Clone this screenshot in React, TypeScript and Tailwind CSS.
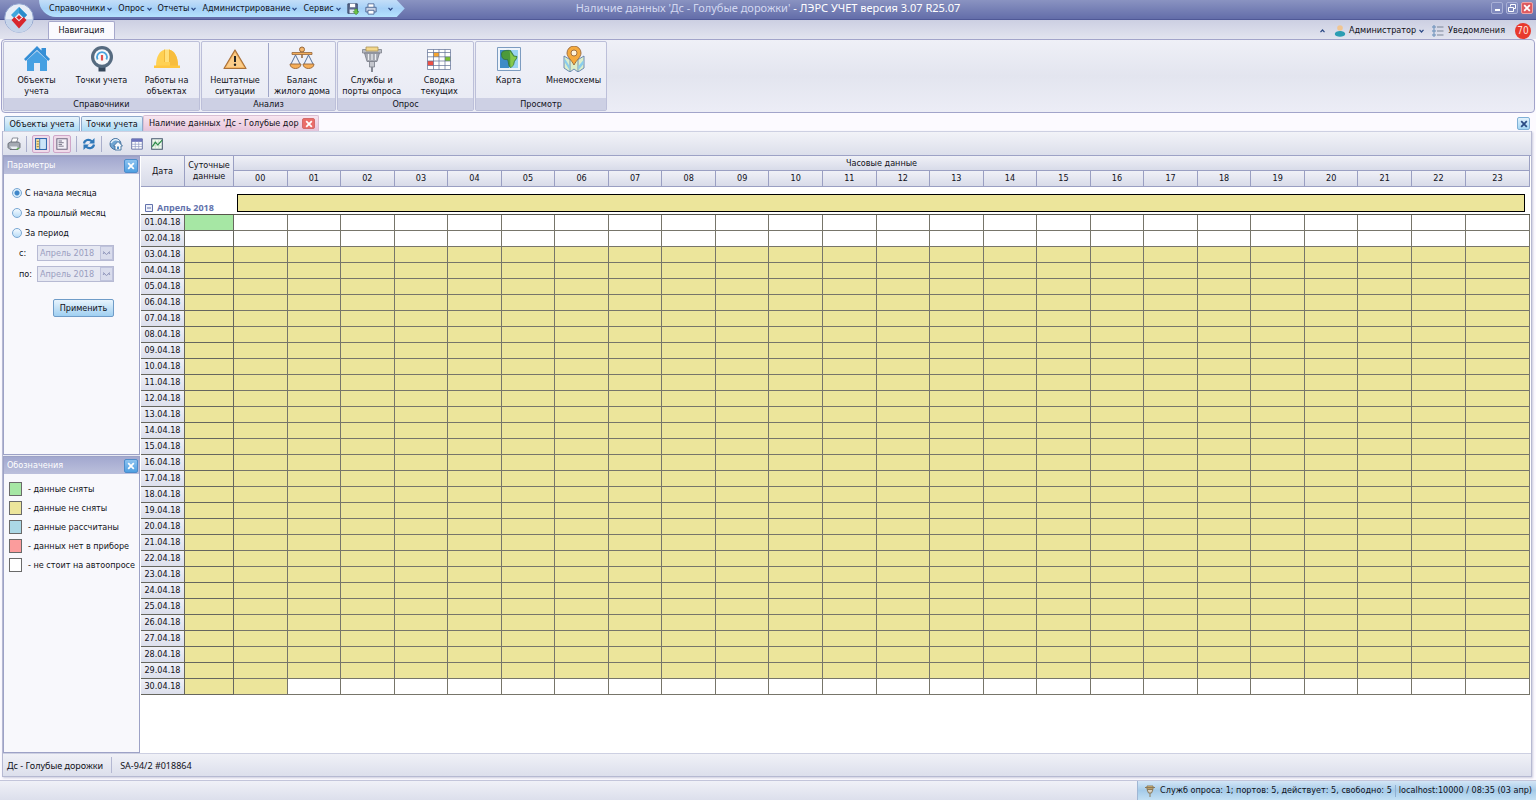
import { useState } from "react";
import type { ReactNode } from "react";

const YELLOW = "bg-[#ece59b]";
const GREEN = "bg-[#a6e7a4]";

function Chevron({ up = false }: { up?: boolean }) {
  return (
    <svg viewBox="0 0 5 4" className="h-1 w-[5px] shrink-0" fill="none" stroke="#2c4a86" strokeWidth="1.2">
      <path d={up ? "M.5 3.200 2.500 1l2 2.200" : "M.5.8l2 2.200 2-2.200"} />
    </svg>
  );
}

function Cross({ color }: { color: string }) {
  return (
    <svg viewBox="0 0 10 10" className="h-2 w-2" stroke={color} strokeWidth="2.2" fill="none">
      <path d="M1.5 1.5l7 7M8.5 1.5l-7 7" />
    </svg>
  );
}

/* ---------- ribbon icons ---------- */
const HouseIcon = () => (
  <svg viewBox="0 0 26 26" className="h-full w-full">
    <path d="M3 14v11h7v-8h6v8h7V14L13 5z" fill="#46a0e2" />
    <path d="M0 13 13 0l4.500 4.500V2H22v7l4 4-1.800 2L13 4 1.800 15z" fill="#358fd6" />
    <path d="M10 25v-8h6v8" fill="#e8ebf4" />
  </svg>
);
const GaugeIcon = () => (
  <svg viewBox="0 0 26 26" className="h-full w-full">
    <path d="M9.500 19h7v6.500h-7z" fill="#34465a" />
    <circle cx="13" cy="11" r="11" fill="#566b80" />
    <circle cx="13" cy="11" r="7.800" fill="#f6f8fb" />
    <path d="M8.600 13.500a5 5 0 1 1 8.800 0" fill="none" stroke="#4aa3dd" strokeWidth="1.800" />
    <path d="M13 9v5.500" stroke="#e2504d" strokeWidth="2.200" />
  </svg>
);
const HelmetIcon = () => (
  <svg viewBox="0 0 26 26" className="h-full w-full">
    <path d="M2 20C2 10 6 5 10 4h6c4 1 8 6 8 16z" fill="#ffd152" />
    <path d="M16 4c4 1 8 6 8 16h-8z" fill="#f7bd3e" />
    <path d="M10.500 3.500h5V16h-5z" fill="#ffe07a" />
    <path d="M10.500 3.500V16M15.500 3.500V16" stroke="#eeb02e" strokeWidth=".8" />
    <path d="M0 19.500h26V22H0z" fill="#ffc640" />
  </svg>
);
const WarnIcon = () => (
  <svg viewBox="0 0 26 26" className="h-full w-full">
    <path d="M13 4 24 22.500H2z" fill="#f5b562" stroke="#a9713a" strokeWidth="1.200" strokeLinejoin="round" />
    <path d="M13 6.500 21.800 21H4.200z" fill="#fbcd8a" />
    <path d="M13 10v6" stroke="#222" strokeWidth="2" />
    <circle cx="13" cy="18.800" r="1.200" fill="#222" />
  </svg>
);
const ScalesIcon = () => (
  <svg viewBox="0 0 26 26" className="h-full w-full" fill="none">
    <circle cx="13" cy="3.500" r="2.500" fill="#f4b76d" stroke="#96663a" />
    <path d="M3 6.500h20v2H3z" fill="#f3ae5c" stroke="#96663a" strokeWidth=".8" />
    <path d="M13 8.500V12" stroke="#96663a" strokeWidth="1.500" />
    <path d="M6.500 9 2 18M6.500 9 11 18M19.500 9 15 18M19.500 9 24 18" stroke="#54709a" strokeWidth="1" />
    <path d="M1 18h11c0 6-11 6-11 0zM14 18h11c0 6-11 6-11 0z" fill="#f6ae58" stroke="#96663a" strokeWidth=".9" />
  </svg>
);
const PlugIcon = () => (
  <svg viewBox="0 0 26 26" className="h-full w-full">
    <path d="M3.500 3.500h19V7h-19z" fill="#b9bcc4" stroke="#7e828c" strokeWidth=".8" />
    <path d="M7 1h12v4H7z" fill="#f3d78b" stroke="#a99256" strokeWidth=".8" />
    <path d="M5.500 7h15L18 15.500H8z" fill="#a6a9b2" stroke="#777b86" strokeWidth=".8" />
    <path d="M10.500 15.500h5V21h-5z" fill="#c4c6cd" stroke="#777b86" strokeWidth=".8" />
    <path d="M9.500 8v6M13 8v6M16.500 8v6" stroke="#eceef2" strokeWidth="1.200" />
    <path d="M13 21v5" stroke="#858994" strokeWidth="2" />
  </svg>
);
const GridIcon = () => (
  <svg viewBox="0 0 26 26" className="h-full w-full">
    <path d="M1.500 3.500h23v20h-23z" fill="#fff" />
    <path d="M7.500 6.500h5.500v4.300H7.500z" fill="#f7a52e" />
    <path d="M19 10.800h5.500V15H19z" fill="#7fc132" />
    <path d="M1.500 15h6v4.500h-6z" fill="#ee4f43" />
    <path d="M1.500 3.500h23v20h-23zM7.500 3.500v20M13 3.500v20M19 3.500v20M1.500 6.500h23M1.500 10.800h23M1.500 15h23M1.500 19.500h23" fill="none" stroke="#5f6f93" strokeWidth=".7" />
  </svg>
);
const MapIcon = () => (
  <svg viewBox="0 0 26 26" className="h-full w-full">
    <path d="M1.500 1.500h23v23h-23z" fill="#eef4fb" stroke="#7d9cc0" />
    <path d="M4 4h18v18H4z" fill="#3f8cc6" />
    <path d="M13 4h9v18h-9z" fill="#9ad3f2" />
    <path d="M5.500 8c0-3 3.500-4 9-3.500l3.500 5.500 3 .5c0 3-3 4-3 6.500 0 2-2 4-3.500 4.500-2.500-1-1.500-5-3-8-4 .5-6-1-6-5.500z" fill="#4c9a3a" stroke="#2f6b31" strokeWidth=".7" />
    <path d="M13.500 5l4 5.500 3 .5c-.5 2.500-3 3.500-3 6 0 2-1 3.500-2.800 4.200-1-4 .3-10-1.200-16.200z" fill="#86c94c" />
  </svg>
);
const PinIcon = () => (
  <svg viewBox="0 0 26 26" className="h-full w-full">
    <path d="M3 10l5 3 5-1 5 1 5-3v12l-6 4-4-3-4 3-6-4z" fill="#dceecb" stroke="#5d7fae" strokeWidth=".9" />
    <path d="M9 13v13M17 13v13" stroke="#5d7fae" strokeWidth=".8" />
    <path d="M3.500 16l5 8v-4l-5-8zM17.500 20l5-6v4l-5 6z" fill="#89cdee" />
    <path d="M13 0a7 7 0 0 1 7 7c0 4-4.500 7-7 12-2.500-5-7-8-7-12a7 7 0 0 1 7-7z" fill="#f5aa3e" stroke="#96683a" strokeWidth=".9" />
    <circle cx="13" cy="7" r="3" fill="#fff3dc" stroke="#96683a" strokeWidth=".9" />
  </svg>
);

/* ---------- small icons ---------- */
const PrinterIcon = () => (
  <svg viewBox="0 0 14 14" className="h-[14px] w-[14px]">
    <path d="M4 5.500 5.500 1H11L9.500 5.500z" fill="#fff" stroke="#6f7480" strokeWidth=".8" />
    <path d="M1 6.500 3.500 5h8L13 6.500v4L11 12.500H3L1 10.500z" fill="#a5aab3" stroke="#555b66" strokeWidth=".8" />
    <path d="M3 9.500h7l1 2.500H5z" fill="#e9edf2" />
    <path d="M9.500 12.500l2.500-1.500" stroke="#5fb548" strokeWidth="1.200" />
  </svg>
);
const PrinterBlueIcon = () => (
  <svg viewBox="0 0 14 14" className="h-3 w-3">
    <path d="M3.500 5V1h7v4" fill="#fff" stroke="#44608f" />
    <path d="M1 5h12v5.500H1z" fill="#c9d3e6" stroke="#44608f" />
    <path d="M3.500 8.500h7V13h-7z" fill="#fff" stroke="#44608f" />
  </svg>
);
const SaveIcon = () => (
  <svg viewBox="0 0 14 14" className="h-3 w-3">
    <path d="M1 1h11v11H1z" fill="#5d6a8d" stroke="#31405f" />
    <path d="M3.500 1h6v4h-6z" fill="#fff" />
    <path d="M3 7.500h7V12H3z" fill="#dfe6f3" />
    <path d="M9 7v3H7.200l3.400 3.800L14 10h-2V7z" fill="#6fc443" stroke="#33842c" strokeWidth=".6" />
  </svg>
);
const PanelLeftIcon = () => (
  <svg viewBox="0 0 14 14" className="h-3 w-3">
    <path d="M.8.8h12.400v12.400H.8z" fill="#fff" stroke="#2f69ad" strokeWidth="1.500" />
    <path d="M1.500 1.500h4v11h-4z" fill="#f9dc92" />
    <path d="M6 1.500h6.500v11H6z" fill="#cbe5f9" />
    <path d="M5.500 1v12" stroke="#2f69ad" />
    <path d="M2 4h2.500M2 7h2.500M2 10h2.500" stroke="#9a7b33" />
  </svg>
);
const PanelDocIcon = () => (
  <svg viewBox="0 0 14 14" className="h-3 w-3">
    <path d="M1 .8h12v12.400H1z" fill="#f4f1f8" stroke="#6d6a80" strokeWidth="1.200" />
    <path d="M3 3.500h4M3 5.500h6M3 7.500h4M3 9.500h6" stroke="#57546b" strokeWidth=".9" />
  </svg>
);
const RefreshIcon = () => (
  <svg viewBox="0 0 14 14" className="h-[14px] w-[14px]" fill="none" stroke="#2f78b9" strokeWidth="2.200">
    <path d="M2 6.500C2.500 3 7 1.500 10 4.500M12 7.500c-.5 3.500-5 5-8 2" />
    <path d="M12.500 1v5.500H7zM1.500 13V7.500H7z" fill="#2f78b9" stroke="none" />
  </svg>
);
const GlobeHomeIcon = () => (
  <svg viewBox="0 0 14 14" className="h-[14px] w-[14px]">
    <circle cx="6.500" cy="7" r="5.500" fill="#6fa5d2" stroke="#48739f" />
    <path d="M2 6c2-4 6-4 8-2" stroke="#e3f0fa" strokeWidth="1.400" fill="none" />
    <path d="M4.500 9 9 4.500 13.500 9H12v4H6V9z" fill="#f5f8fb" stroke="#3f6f9d" strokeWidth=".9" />
    <path d="M8 9.500h2V12H8z" fill="#4a8ac2" />
  </svg>
);
const TableIcon = () => (
  <svg viewBox="0 0 14 14" className="h-3 w-3">
    <path d="M.8 1h12.400v12H.8z" fill="#fff" stroke="#56649b" />
    <path d="M.8 1h12.400v3.500H.8z" fill="#6c73bd" />
    <path d="M1 7.300h12M1 10h12M5 4v9M9 4v9" stroke="#8f9ac5" strokeWidth=".8" />
  </svg>
);
const ChartIcon = () => (
  <svg viewBox="0 0 14 14" className="h-3 w-3" fill="none">
    <path d="M.8 1h12.400v12H.8z" fill="#f2fbf1" stroke="#44566b" strokeWidth="1.200" />
    <path d="M1 5h12M1 9h12M5 2v11M9 2v11" stroke="#b9d3bd" strokeWidth=".7" />
    <path d="M1.500 10 5 5l3 3 5-5.500" stroke="#2d8b49" strokeWidth="1.400" />
  </svg>
);

const menus = ["Справочники", "Опрос", "Отчеты", "Администрирование", "Сервис"];

type Item = { icon: ReactNode; lines: string[] };
const groups: { title: string; width: string; divided?: boolean; items: Item[] }[] = [
  {
    title: "Справочники",
    width: "w-[197px]",
    items: [
      { icon: <HouseIcon />, lines: ["Объекты", "учета"] },
      { icon: <GaugeIcon />, lines: ["Точки учета"] },
      { icon: <HelmetIcon />, lines: ["Работы на", "объектах"] },
    ],
  },
  {
    title: "Анализ",
    width: "w-[135px]",
    divided: true,
    items: [
      { icon: <WarnIcon />, lines: ["Нештатные", "ситуации"] },
      { icon: <ScalesIcon />, lines: ["Баланс", "жилого дома"] },
    ],
  },
  {
    title: "Опрос",
    width: "w-[137px]",
    items: [
      { icon: <PlugIcon />, lines: ["Службы и", "порты опроса"] },
      { icon: <GridIcon />, lines: ["Сводка", "текущих"] },
    ],
  },
  {
    title: "Просмотр",
    width: "w-[132px]",
    items: [
      { icon: <MapIcon />, lines: ["Карта"] },
      { icon: <PinIcon />, lines: ["Мнемосхемы"] },
    ],
  },
];

const legend = [
  { color: GREEN, text: "- данные сняты" },
  { color: YELLOW, text: "- данные не сняты" },
  { color: "bg-[#abd8e6]", text: "- данные рассчитаны" },
  { color: "bg-[#fb9c9c]", text: "- данных нет в приборе" },
  { color: "bg-white", text: "- не стоит на автоопросе" },
];

const hours = Array.from({ length: 24 }, (_, i) => String(i).padStart(2, "0"));
const days = Array.from({ length: 30 }, (_, i) => i + 1);

function cellColor(day: number, hour: number) {
  if (day < 3) return "bg-white";
  if (day === 30 && hour > 0) return "bg-white";
  return YELLOW;
}
function dayColor(day: number) {
  if (day === 1) return GREEN;
  return day === 2 ? "bg-white" : YELLOW;
}

function TitleBar() {
  return (
    <header className="relative grid h-5 grid-cols-[1fr_auto_1fr] items-start border-b border-[#4f5896] bg-linear-to-b from-[#8a93c1] to-[#636da9]">
      <div className="flex pl-[39px]">
        <nav className="flex h-[17px] items-center gap-[6px] rounded-bl-full bg-linear-to-b from-[#c3def8] via-[#a5d0f7] to-[#b4e2fd] pl-[10px] pr-3 [clip-path:polygon(0_0,calc(100%-8px)_0,100%_50%,calc(100%-8px)_100%,0_100%)]">
          {menus.map((m) => (
            <button key={m} type="button" className="flex items-center gap-[2px] whitespace-nowrap">
              {m}
              <Chevron />
            </button>
          ))}
          <button type="button" aria-label="Сохранить"><SaveIcon /></button>
          <button type="button" aria-label="Печать"><PrinterBlueIcon /></button>
          <button type="button" aria-label="Настройка панели" className="pl-[5px]"><Chevron /></button>
        </nav>
      </div>
      <h1 className="whitespace-nowrap font-['Noto_Sans',sans-serif] text-[11px] leading-4 text-white">
        <span className="text-[#d3d8f0]">Наличие данных 'Дс - Голубые дорожки'</span> - ЛЭРС УЧЕТ версия 3.07 R25.07
      </h1>
      <div className="flex justify-end gap-[3px] pr-[3px] pt-[2px]">
        <button type="button" aria-label="Свернуть" className="flex h-3 w-3 items-end justify-center rounded-xs border border-[#a9b0d6] bg-[#7f89bd] pb-[2px]">
          <span className="h-[2px] w-[5px] bg-white" />
        </button>
        <button type="button" aria-label="Восстановить" className="flex h-3 w-3 items-center justify-center rounded-xs border border-[#a9b0d6] bg-[#7f89bd]">
          <svg viewBox="0 0 8 8" className="h-2 w-2" fill="none" stroke="#fff"><path d="M2.500 2.500v-2h5v4h-2M.5 3.500h5v4h-5z" /></svg>
        </button>
        <button type="button" aria-label="Закрыть" className="flex h-3 w-3 items-center justify-center rounded-xs border border-[#f0a3a6] bg-[#dd5a60]">
          <Cross color="#fff" />
        </button>
      </div>
      <button type="button" aria-label="Главное меню" className="absolute left-[4px] top-[3px] h-[30px] w-[30px]">
        <svg viewBox="0 0 30 30" className="h-full w-full">
          <circle cx="15" cy="15" r="14.300" fill="#e6edf7" stroke="#8fa3cd" />
          <path d="M1.500 16a13.500 13.500 0 0 0 27 0z" fill="#c6d4ea" />
          <path d="M15 4l8 8-3 3-5-5-5 5-3-3z" fill="#3fa6dd" />
          <path d="M15 4l8 8-3 3-5-5z" fill="#2b8ccb" />
          <path d="M7.500 17l3-3 4.500 4.500 4.500-4.500 3 3-7.500 8.500z" fill="#d8262c" />
          <path d="M15 11.500l3 3-3 3-3-3z" fill="#d8262c" stroke="#fff" strokeWidth=".8" />
        </svg>
      </button>
    </header>
  );
}

function TabStrip() {
  return (
    <div className="flex h-[19px] items-end justify-between bg-linear-to-b from-[#cccfe2] to-[#e2e4ef]">
      <button type="button" className="ml-12 h-[18px] w-[67px] rounded-t-xs border border-b-0 border-[#a6a8cc] bg-[#fafafe]">Навигация</button>
      <div className="flex h-full items-center pr-[5px] pt-[2px]">
        <button type="button" aria-label="Свернуть ленту" className="mr-[9px]"><Chevron up /></button>
        <button type="button" className="flex items-center gap-[3px]">
          <svg viewBox="0 0 12 12" className="h-3 w-3">
            <circle cx="6" cy="3" r="2.800" fill="#f0c592" />
            <path d="M.8 9c0-4 10.400-4 10.400 0 0 3.600-10.400 3.600-10.400 0z" fill="#2b9db3" />
          </svg>
          Администратор
          <Chevron />
        </button>
        <button type="button" className="ml-[8px] flex items-center gap-[4px]">
          <svg viewBox="0 0 12 12" className="h-3 w-3" fill="none" stroke="#5d86b3">
            <circle cx="2" cy="2" r="1.200" /><circle cx="2" cy="6" r="1.200" /><circle cx="2" cy="10" r="1.200" />
            <path d="M5 2h6.500M5 6h6.500M5 10h6.500" stroke="#7b8597" />
          </svg>
          Уведомления
        </button>
        <span className="ml-[10px] flex h-4 w-4 items-center justify-center rounded-full bg-[#e8392d] text-[10px] text-[#ffe3df]">70</span>
      </div>
    </div>
  );
}

function Ribbon() {
  return (
    <div className="mx-px flex h-[74px] gap-px rounded-sm border border-[#a2a4ca] bg-linear-to-b from-[#eff0f7] via-[#e3e5ef] to-[#ecedf6] p-px">
      {groups.map((g) => (
        <section key={g.title} className={`${g.width} flex flex-col rounded-xs border border-[#bcbfd9] bg-linear-to-b from-[#f1f2f8] to-[#e8eaf4]`}>
          <div className={`flex flex-1 ${g.divided ? "divide-x divide-[#9fa5c8]" : ""}`}>
            {g.items.map((it) => (
              <button key={it.lines[0]} type="button" className="my-px flex flex-1 flex-col items-center gap-[3px] pt-[3px] leading-[11px]">
                <span className="h-[26px] w-[26px]">{it.icon}</span>
                <span className="flex flex-col whitespace-nowrap">
                  {it.lines.map((l) => <span key={l}>{l}</span>)}
                </span>
              </button>
            ))}
          </div>
          <h2 className="h-3 bg-[#cdd0e4] text-center leading-[12px]">{g.title}</h2>
        </section>
      ))}
    </div>
  );
}

function ToolSep() {
  return <span className="mx-[5px] h-4 w-px bg-[#a9aecb]" />;
}

function DocTabs() {
  return (
    <div className="flex h-[18px] items-end bg-[#fcfaff] pl-[2px] pr-[2px] pt-[2px]">
      <button type="button" className="h-[15px] w-[76px] whitespace-nowrap rounded-t-xs border border-b-0 border-[#8fa9cb] bg-linear-to-b from-[#e9f4fc] to-[#a9d9f3] leading-[14px]">Объекты учета</button>
      <button type="button" className="ml-px h-[15px] w-[62px] whitespace-nowrap rounded-t-xs border border-b-0 border-[#8fa9cb] bg-linear-to-b from-[#e9f4fc] to-[#a9d9f3] leading-[14px]">Точки учета</button>
      <div className="flex h-4 w-[176px] items-center justify-between rounded-t-xs border border-b-0 border-[#d9bfd3] bg-linear-to-b from-[#f8e6f0] to-[#e6c3da] pl-[5px] pr-[3px]">
        <button type="button" className="whitespace-nowrap">Наличие данных 'Дс - Голубые дор</button>
        <button type="button" aria-label="Закрыть вкладку" className="flex h-[11px] w-[13px] items-center justify-center rounded-xs border border-[#d36a6a] bg-[#ea6d69]">
          <Cross color="#fff" />
        </button>
      </div>
      <button type="button" aria-label="Закрыть" className="mb-px ml-auto flex h-[13px] w-[13px] items-center justify-center rounded-xs border border-[#7fb0d6] bg-linear-to-b from-[#e2f2fc] to-[#a3d6f5]">
        <Cross color="#2a4b84" />
      </button>
    </div>
  );
}

function Toolbar() {
  const boxed = "flex h-[18px] w-[18px] items-center justify-center rounded-xs border border-[#cfa6c8] bg-[#f0dbea]";
  return (
    <div className="flex h-[25px] items-center border-y border-t-[#cdd0e2] border-b-[#9da2c6] bg-linear-to-b from-[#f2f3f8] to-[#dcdfeb] pl-[4px]">
      <button type="button" aria-label="Печать"><PrinterIcon /></button>
      <ToolSep />
      <button type="button" aria-label="Параметры" aria-pressed="true" className={boxed}><PanelLeftIcon /></button>
      <button type="button" aria-label="Обозначения" aria-pressed="true" className={`${boxed} ml-[3px]`}><PanelDocIcon /></button>
      <ToolSep />
      <button type="button" aria-label="Обновить"><RefreshIcon /></button>
      <ToolSep />
      <div className="flex items-center gap-2 pl-[2px]">
        <button type="button" aria-label="Объект"><GlobeHomeIcon /></button>
        <button type="button" aria-label="Таблица"><TableIcon /></button>
        <button type="button" aria-label="График"><ChartIcon /></button>
      </div>
    </div>
  );
}

function PanelHeader({ title }: { title: string }) {
  return (
    <div className="flex h-[17px] items-center justify-between bg-linear-to-b from-[#a2a8cf] to-[#bcc0dc] pl-[3px] pr-px">
      <h2 className="text-white">{title}</h2>
      <button type="button" aria-label={`Закрыть: ${title}`} className="flex h-[14px] w-[14px] items-center justify-center rounded-xs border border-[#4c8ccb] bg-linear-to-b from-[#8cc3f0] to-[#4fa0e2]">
        <Cross color="#fff" />
      </button>
    </div>
  );
}

function Period({ id, label }: { id: string; label: string }) {
  return (
    <div className="flex h-4 items-center">
      <label htmlFor={id} className="w-[18px]">{label}</label>
      <div className="relative flex">
        <select id={id} disabled className="h-4 w-[77px] appearance-none border border-[#b7bad3] bg-[#e6e8f2] pl-[2px] text-[#9a9ebf] opacity-100">
          <option>Апрель 2018</option>
        </select>
        <span className="pointer-events-none absolute right-px top-px flex h-[14px] w-[13px] items-center justify-center border border-[#bfc3dc] bg-[#d9dcec]">
          <svg viewBox="0 0 9 6" className="h-[6px] w-[9px]" fill="none" stroke="#8f95ba"><path d="M1 1.500l3.500 3 3.500-3M1 4l1.500-2M8 4 6.500 2" /></svg>
        </span>
      </div>
    </div>
  );
}

function SidePanels() {
  const [range, setRange] = useState("month");
  const radios = [
    { id: "month", text: "С начала месяца" },
    { id: "prev", text: "За прошлый месяц" },
    { id: "period", text: "За период" },
  ];
  return (
    <aside className="flex w-[137px] shrink-0 flex-col gap-px">
      <section className="h-[299px] border border-[#9da2c6] bg-[#f8f8fc]">
        <PanelHeader title="Параметры" />
        <div className="flex flex-col gap-1 pl-[8px] pt-[11px]">
          {radios.map((r) => (
            <div key={r.id} className="flex h-4 items-center gap-[3px]">
              <input
                id={r.id}
                type="radio"
                name="range"
                checked={range === r.id}
                onChange={() => setRange(r.id)}
                className="h-[10px] w-[10px] appearance-none rounded-full border border-[#79a7d3] bg-linear-to-b from-[#f4faff] to-[#b9dcf6] checked:bg-[radial-gradient(circle,#3f86c9_0_2px,#d8ecfb_3px)]"
              />
              <label htmlFor={r.id}>{r.text}</label>
            </div>
          ))}
          <div className="flex flex-col gap-[5px] pl-[7px]">
            <Period id="from" label="с:" />
            <Period id="to" label="по:" />
          </div>
        </div>
        <button type="button" className="ml-[49px] mt-[17px] h-[18px] w-[61px] rounded-xs border border-[#6f9cc8] bg-linear-to-b from-[#e8f4fd] via-[#c4e1f6] to-[#9fd0f2]">Применить</button>
      </section>
      <section className="flex-1 border border-[#9da2c6] bg-[#f8f8fc]">
        <PanelHeader title="Обозначения" />
        <ul className="flex flex-col gap-[5px] pl-[5px] pt-2">
          {legend.map((l) => (
            <li key={l.text} className="flex h-[14px] items-center gap-[6px] whitespace-nowrap">
              <span className={`h-[14px] w-[13px] shrink-0 border border-[#6a6a6a] ${l.color}`} />
              {l.text}
            </li>
          ))}
        </ul>
      </section>
    </aside>
  );
}

function DataGrid() {
  const head = "border-b border-r border-[#9a9fc2] bg-linear-to-b from-[#f0f1f7] to-[#d8dbe9] font-normal";
  return (
    <div className="min-w-0 flex-1 bg-white pl-px pr-px">
      <table className="w-full table-fixed border-separate border-spacing-0 text-center">
        <colgroup>
          <col className="w-[44px]" />
          <col className="w-[49px]" />
          {hours.map((h, i) => <col key={h} className={i === 23 ? "w-[64px]" : ""} />)}
        </colgroup>
        <thead>
          <tr className="h-[15px]">
            <th rowSpan={2} className={`${head} p-0`}>Дата</th>
            <th rowSpan={2} className={`${head} p-0 leading-[11px]`}>Суточные данные</th>
            <th colSpan={24} className={`${head} p-0 leading-[13px]`}>Часовые данные</th>
          </tr>
          <tr className="h-4">
            {hours.map((h) => <th key={h} className={`${head} p-0 leading-[15px]`}>{h}</th>)}
          </tr>
        </thead>
        <tbody>
          <tr className="h-7">
            <th colSpan={2} className="border-b border-[#55554a] p-0 pl-1 text-left align-bottom">
              <button type="button" className="flex items-center gap-1 font-['Noto_Sans',sans-serif] text-[9px] font-bold leading-3 text-[#6272ac]">
                <svg viewBox="0 0 8 8" className="h-2 w-2" fill="#eef1fa" stroke="#6272ac"><path d="M.5.5h7v7h-7zM2 4h4" /></svg>
                Апрель 2018
              </button>
            </th>
            <td colSpan={24} className="border-b border-[#55554a] p-0 pl-[3px] pr-[5px] pt-[4px]">
              <div className={`h-[18px] border border-black ${YELLOW}`} />
            </td>
          </tr>
          {days.map((d) => (
            <tr key={d} className="h-4">
              <th className="border-b border-r border-[#66665e] bg-linear-to-b from-[#f0f1f7] to-[#dcdfec] p-0 font-normal leading-[15px]">
                {String(d).padStart(2, "0")}.04.18
              </th>
              <td className={`border-b border-r border-[#66665e] p-0 ${dayColor(d)}`} />
              {hours.map((h, i) => <td key={h} className={`border-b border-r border-[#77756a] p-0 ${cellColor(d, i)}`} />)}
            </tr>
          ))}
        </tbody>
      </table>
    </div>
  );
}

export default function App() {
  return (
    <div className="flex min-h-screen flex-col bg-[#fcfaff] font-['DejaVu_Sans_Condensed',sans-serif] text-[9px] leading-[13px] text-[#101018]">
      <TitleBar />
      <TabStrip />
      <Ribbon />
      <main className="ml-[2px] mr-1 flex flex-1 flex-col">
        <DocTabs />
        <div className="flex flex-1 flex-col border-x border-b border-[#b6b9d2] shadow-[1px_1px_2px_#c9cbdc]">
          <Toolbar />
          <div className="flex flex-1 bg-[#e8eaf3]">
            <SidePanels />
            <DataGrid />
          </div>
          <footer className="flex h-[23px] items-center border-t border-[#cdd0e2] bg-linear-to-b from-[#f0f1f7] to-[#dcdfec] pl-[4px] font-['Noto_Sans',sans-serif]">
            <span>Дс - Голубые дорожки</span>
            <span className="mx-2 h-4 w-px bg-[#b4b8d2]" />
            <span>SA-94/2 #018864</span>
          </footer>
        </div>
      </main>
      <div className="mt-[3px] flex h-5 justify-end border-t border-[#c3c5da] bg-linear-to-b from-[#f0f1f7] to-[#dcdfec]">
        <div className="flex items-center border-l border-[#9fb6d4] bg-linear-to-b from-[#d4e6f6] via-[#a5cbe9] to-[#c3e0f4] pl-[6px] pr-1">
          <svg viewBox="0 0 12 12" className="mr-[4px] h-3 w-3" fill="none" stroke="#8b7a5a">
            <path d="M1 2.500h10M3 1h6v3H3z" fill="#f5c878" />
            <path d="M3 4.500h6L7.500 8h-3zM6 8v4" fill="#d8d2c4" />
          </svg>
          <span>Служб опроса: 1; портов: 5, действует: 5, свободно: 5</span>
          <span className="mx-[3px] h-3 w-px bg-[#8fb0d2]" />
          <span>localhost:10000 / 08:35 (03 апр)</span>
        </div>
      </div>
    </div>
  );
}
